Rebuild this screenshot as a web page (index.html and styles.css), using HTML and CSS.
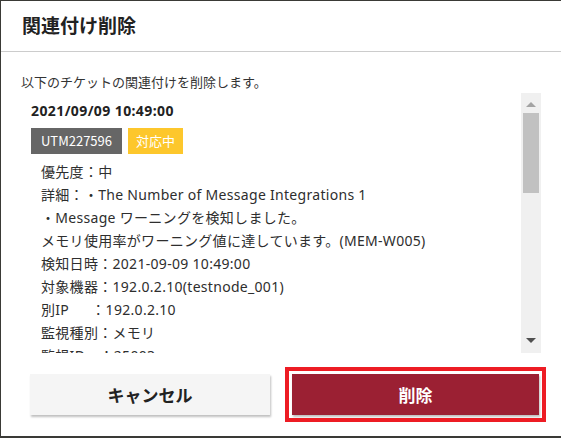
FILE: index.html
```html
<!DOCTYPE html>
<html lang="ja">
<head>
  <meta charset="UTF-8" />
  <meta name="viewport" content="width=device-width, initial-scale=1.0"/>
  <title>関連付け削除</title>
  <link rel="stylesheet" href="styles.css">
</head>
<body>

  <!-- Delete association dialog -->
  <div class="dialog">
    <div class="dialog-header">
      <h1>関連付け削除</h1>
    </div>

    <div class="dialog-body">
      <p class="intro">以下のチケットの関連付けを削除します。</p>

      <div class="ticket-box">
        <div class="ticket-list">
          <div class="ticket">
            <div class="ticket-date">2021/09/09 10:49:00</div>
            <div class="ticket-tags">
              <span class="tag tag-id">UTM227596</span>
              <span class="tag tag-status">対応中</span>
            </div>
            <ul class="ticket-details">
              <li>優先度：中</li>
              <li>詳細：・The Number of Message Integrations 1</li>
              <li>・Message ワーニングを検知しました。</li>
              <li>メモリ使用率がワーニング値に達しています。(MEM-W005)</li>
              <li>検知日時：2021-09-09 10:49:00</li>
              <li>対象機器：192.0.2.10(testnode_001)</li>
              <li>別IP　  ：192.0.2.10</li>
              <li>監視種別：メモリ</li>
              <li>監視ID　：25003</li>
              <li>監視項目：メモリ使用率</li>
              <li>しきい値：80%</li>
              <li>通知先　：運用チーム</li>
            </ul>
          </div>

          <div class="ticket">
            <div class="ticket-date">2021/09/09 10:42:00</div>
            <div class="ticket-tags">
              <span class="tag tag-id">UTM227581</span>
              <span class="tag tag-status">対応中</span>
            </div>
            <ul class="ticket-details">
              <li>優先度：中</li>
              <li>詳細：・The Number of Message Integrations 1</li>
              <li>・Message ワーニングを検知しました。</li>
              <li>CPU使用率がワーニング値に達しています。(CPU-W003)</li>
              <li>検知日時：2021-09-09 10:42:00</li>
              <li>対象機器：192.0.2.10(testnode_001)</li>
            </ul>
          </div>
        </div>

        <!-- scrollbar (drawn, the screenshot browser hides native ones) -->
        <div class="scrollbar">
          <div class="scroll-btn scroll-up"><span class="arrow-up"></span></div>
          <div class="scroll-track"><div class="scroll-thumb"></div></div>
          <div class="scroll-btn scroll-down"><span class="arrow-down"></span></div>
        </div>
      </div>
    </div>

    <div class="dialog-footer">
      <button type="button" class="btn btn-cancel">キャンセル</button>
      <button type="button" class="btn btn-delete">削除</button>
    </div>
  </div>

</body>
</html>
```

FILE: styles.css
```css
html, body {
  margin: 0;
  height: 100%;
  overflow: hidden;
}

body {
  font-family: "Noto Sans CJK JP", "Noto Sans", sans-serif;
  background-color: #3a3a36;
  color: #333;
}

.dialog {
  margin: 1px 0 0 1px;
  width: 560px;
  height: 435px;
  background-color: #fff;
  display: flex;
  flex-direction: column;
}

/* header */
.dialog-header {
  height: 50px;
  padding: 0 21px;
  border-bottom: 1px solid #ccc;
  display: flex;
  align-items: center;
}

.dialog-header h1 {
  margin: 0;
  font-size: 19px;
  font-weight: bold;
  color: #222;
  line-height: 26px;
  padding-bottom: 2px;
}

/* body */
.dialog-body {
  padding: 20px 20px 0 20px;
}

.intro {
  margin: 0 0 1px;
  font-size: 13px;
  line-height: 20px;
  color: #333;
}

.ticket-box {
  display: flex;
  height: 260px;
}

.ticket-list {
  flex: 1;
  overflow: hidden;
  padding: 8px 0 0 10px;
}

.ticket + .ticket {
  margin-top: 12px;
}

.ticket-date {
  font-family: "Noto Sans", "Noto Sans CJK JP", sans-serif;
  font-size: 14px;
  font-weight: bold;
  letter-spacing: 0.4px;
  line-height: 20px;
  color: #222;
}

.ticket-tags {
  display: flex;
  gap: 6px;
  margin-top: 7px;
}

.tag {
  font-size: 13px;
  line-height: 26px;
  color: #fff;
  padding: 0 10px;
}

.tag-id {
  background-color: #666;
}

.tag-status {
  background-color: #fdc72c;
  padding: 0 8px;
}

.ticket-details {
  list-style: none;
  margin: 6px 0 0;
  padding: 0 0 0 10px;
  font-family: "Noto Sans", "Noto Sans CJK JP", sans-serif;
  font-size: 14px;
  line-height: 23px;
  letter-spacing: 0.3px;
  color: #2e2e2e;
}

.ticket-details li {
  white-space: pre;
}

/* scrollbar */
.scrollbar {
  width: 20px;
  background-color: #f0f0f0;
  display: flex;
  flex-direction: column;
}

.scroll-btn {
  display: flex;
  justify-content: center;
  align-items: flex-start;
}

.scroll-up {
  padding-top: 9px;
  height: 11px;
}

.scroll-down {
  padding-top: 5px;
  height: 15px;
}

.arrow-up {
  border-left: 5px solid transparent;
  border-right: 5px solid transparent;
  border-bottom: 5px solid #a3a3a3;
}

.arrow-down {
  border-left: 5px solid transparent;
  border-right: 5px solid transparent;
  border-top: 5px solid #505050;
}

.scroll-track {
  flex: 1;
  padding: 0 2px;
}

.scroll-thumb {
  height: 80px;
  background-color: #c1c1c1;
}

/* footer */
.dialog-footer {
  display: grid;
  grid-template-columns: 240px 1fr;
  gap: 22px;
  padding: 21px 22px 21px 29px;
}

.btn {
  height: 41px;
  border: none;
  font-family: "Noto Sans CJK JP", "Noto Sans", sans-serif;
  font-size: 17px;
  font-weight: bold;
  cursor: pointer;
  box-shadow: 1px 2px 2px rgba(0, 0, 0, 0.25);
}

.btn-cancel {
  background-color: #f5f5f5;
  color: #222;
}

.btn-delete {
  background-color: #9b2033;
  color: #fff;
  outline: 4px solid #ed1c24;
  outline-offset: 3px;
}
```
